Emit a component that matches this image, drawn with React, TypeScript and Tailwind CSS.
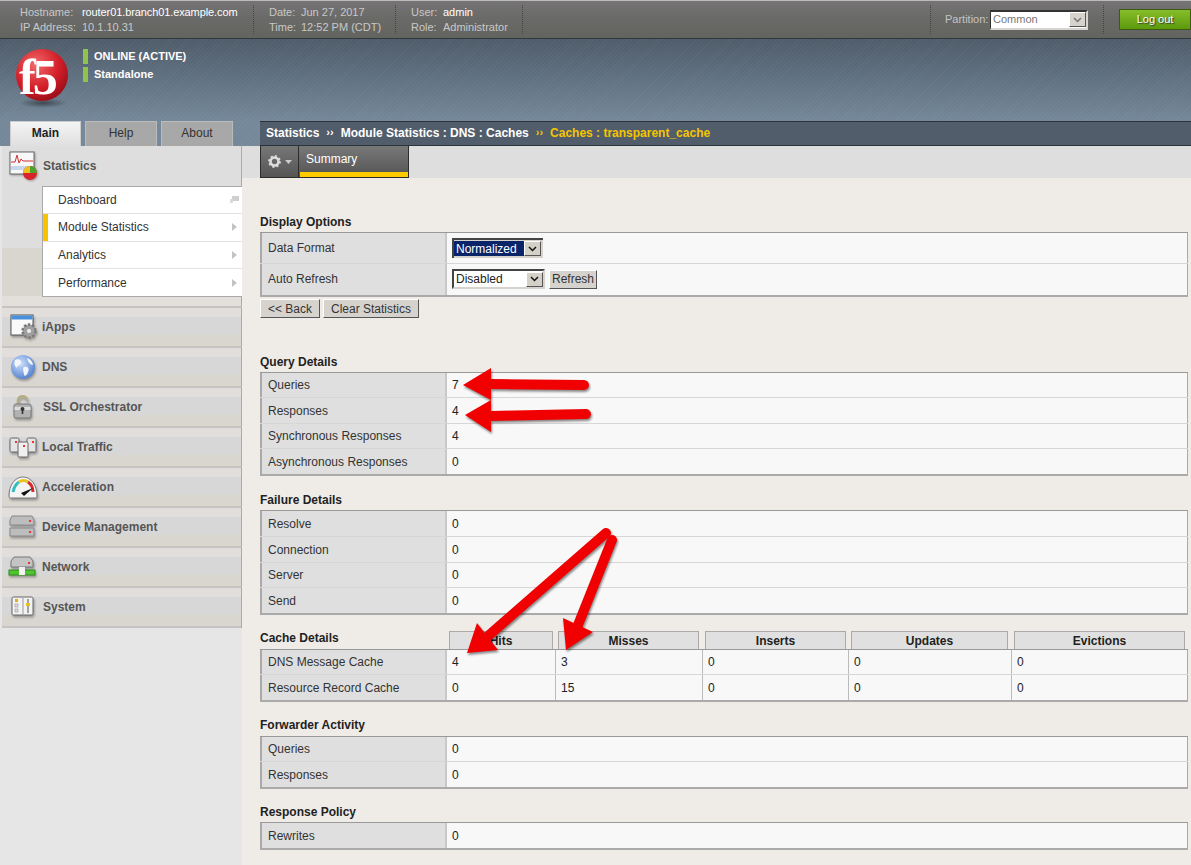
import React from "react";

const Caret = () => (
  <svg width="7" height="8" viewBox="0 0 7 8" className="ml-auto mr-[4px]"><path d="M1 0 L6 4 L1 8 Z" fill="#c4c4c4" /></svg>
);

const SelArrow = ({ light }: { light?: boolean }) => (
  <div className={`w-[17px] h-[15px] flex items-center justify-center border-t border-l border-t-white border-l-white border-r border-b border-r-[#555] border-b-[#555] ${light ? "bg-[#d6d2cc]" : "bg-[#d4d0c8]"}`}>
    <svg width="9" height="6" viewBox="0 0 9 6"><path d="M1 1 L4.5 4.5 L8 1" fill="none" stroke={light ? "#777" : "#111"} strokeWidth="1.5" /></svg>
  </div>
);

const Btn = ({ children, w }: { children: React.ReactNode; w: string }) => (
  <div className={`${w} h-[19px] flex items-center justify-center bg-[#d6d3ce] border border-t-white border-l-white border-r-[#555] border-b-[#555] text-[12px] text-[#333]`}>{children}</div>
);

const Row = ({ label, value, h, children }: { label: string; value?: string; h: string; children?: React.ReactNode }) => (
  <div className={`flex ${h} border-b border-[#d6d6d6] last:border-b-2 last:border-[#aaa]`}>
    <div className="w-[187px] shrink-0 bg-[#dfdfdf] border-l-2 border-[#a9a9a9] border-r-2 border-r-[#c8c8c8] pl-[6px] flex items-center text-[12px] text-[#333]">{label}</div>
    <div className="flex-1 bg-[#f8f8f8] pl-[5px] flex items-center text-[12px] text-[#222] border-r border-[#aaa]">{children ?? value}</div>
  </div>
);

const Table = ({ children }: { children: React.ReactNode }) => (
  <div className="border-t border-[#999]">{children}</div>
);

const Title = ({ children, className = "" }: { children: React.ReactNode; className?: string }) => (
  <div className={`h-[16px] flex items-center text-[12px] font-bold text-[#222] ${className}`}>{children}</div>
);

const Logo = () => (
  <svg width="58" height="62" viewBox="0 0 58 62">
    <defs>
      <radialGradient id="f5r" cx="0.38" cy="0.3" r="0.8">
        <stop offset="0" stopColor="#f06a6a" />
        <stop offset="0.55" stopColor="#d41f2a" />
        <stop offset="1" stopColor="#8d0a14" />
      </radialGradient>
      <radialGradient id="f5s" cx="0.5" cy="0.5" r="0.5">
        <stop offset="0" stopColor="#222" stopOpacity="0.6" />
        <stop offset="1" stopColor="#222" stopOpacity="0" />
      </radialGradient>
    </defs>
    <ellipse cx="27" cy="54" rx="24" ry="5" fill="url(#f5s)" />
    <circle cx="26" cy="26" r="26" fill="url(#f5r)" />
    <text x="3" y="45" fontFamily="'Liberation Serif',serif" fontWeight="700" fontSize="50" fill="#fff" letterSpacing="-3">f5</text>
  </svg>
);

const IconStats = () => (
  <svg width="30" height="30" viewBox="0 0 30 30">
    <rect x="1" y="1" width="24" height="22" fill="#f8f8f8" stroke="#666" />
    <rect x="2" y="15" width="22" height="4" fill="#c8d6ec" />
    <path d="M2 11 L6 11 L8 4 L10 12 L12 8 L14 10 L24 10" fill="none" stroke="#d03030" strokeWidth="1" />
    <circle cx="21" cy="22" r="7" fill="#d8232a" />
    <path d="M21 22 L21 15 A7 7 0 0 1 28 22 Z" fill="#4aa42a" />
    <path d="M21 22 L14 22 A7 7 0 0 1 21 15 Z" fill="#f0c020" />
  </svg>
);

const IconApps = () => (
  <svg width="28" height="26" viewBox="0 0 28 26">
    <rect x="1" y="1" width="22" height="20" fill="#fafafa" stroke="#555" />
    <rect x="1.5" y="1.5" width="21" height="4" fill="#4a90d8" />
    <circle cx="19" cy="17" r="6.5" fill="#a0a0a0" stroke="#7a7a7a" strokeWidth="2.5" strokeDasharray="2.5 1.6" />
    <circle cx="19" cy="17" r="2" fill="#eee" />
  </svg>
);

const IconGlobe = () => (
  <svg width="26" height="26" viewBox="0 0 26 26">
    <defs>
      <radialGradient id="gl" cx="0.4" cy="0.35" r="0.8"><stop offset="0" stopColor="#cfe0fb" /><stop offset="1" stopColor="#3e70c8" /></radialGradient>
    </defs>
    <circle cx="13" cy="13" r="12" fill="url(#gl)" />
    <path d="M5 6 C8 4 12 6 11 9 C10 12 7 11 7 14 C6 13 3 11 5 6 Z M14 13 C17 12 20 14 18 18 C17 21 15 23 14 21 C14 18 12 15 14 13 Z M17 4 C20 5 23 8 23 11 C20 11 18 8 17 4 Z" fill="#f2f5fb" />
  </svg>
);

const IconLock = () => (
  <svg width="22" height="26" viewBox="0 0 22 26">
    <path d="M6 10 V6 C6 1 15 1 15 6 V7" fill="none" stroke="#b5ad80" strokeWidth="2.4" />
    <rect x="2" y="10" width="17" height="14" rx="2" fill="#b2b2b2" stroke="#777" />
    <rect x="2.5" y="13" width="16" height="3" fill="#dcdcdc" />
    <circle cx="10.5" cy="15" r="2" fill="#333" />
    <rect x="9.7" y="15" width="1.6" height="5" fill="#333" />
  </svg>
);

const IconLtm = () => (
  <svg width="28" height="22" viewBox="0 0 28 22">
    <rect x="1" y="2" width="9" height="14" rx="1.5" fill="#e4e4e4" stroke="#666" />
    <rect x="18" y="2" width="9" height="14" rx="1.5" fill="#e4e4e4" stroke="#666" />
    <rect x="9" y="6" width="10" height="15" rx="1.5" fill="#efefef" stroke="#666" />
    <rect x="6" y="5" width="2" height="2" fill="#e33" />
    <rect x="14" y="9" width="2" height="2" fill="#e33" />
    <rect x="23" y="5" width="2" height="2" fill="#e33" />
  </svg>
);

const IconGauge = () => (
  <svg width="30" height="24" viewBox="0 0 30 24">
    <path d="M1 21 C1 10 7 2 15 2 C23 2 29 10 29 21 C29 22.5 28 23 27 23 H3 C2 23 1 22.5 1 21 Z" fill="#f4f4f4" stroke="#777" />
    <path d="M5 17 C6 12 8 9 11 7" fill="none" stroke="#35bcc0" strokeWidth="3" />
    <path d="M11 7 C14 5 17 5 20 7" fill="none" stroke="#e9c41e" strokeWidth="3" />
    <path d="M20 7 C23 9 25 13 25 17" fill="none" stroke="#d92a2a" strokeWidth="3" />
    <path d="M13 18 L25 13 L16 21 Z" fill="#111" />
  </svg>
);

const IconDevice = () => (
  <svg width="26" height="24" viewBox="0 0 26 24">
    <path d="M3 1 H23 L25 5 V10 H1 V5 Z" fill="#bdbdbd" stroke="#888" />
    <path d="M1 13 H25 V21 H1 Z" fill="#bdbdbd" stroke="#888" />
    <rect x="20" y="5" width="2" height="2" fill="#e33" />
    <rect x="20" y="16" width="2" height="2" fill="#e33" />
  </svg>
);

const IconNet = () => (
  <svg width="28" height="22" viewBox="0 0 28 22">
    <path d="M6 1 H22 L25 5 V11 H3 V5 Z" fill="#c4c4c4" stroke="#777" />
    <rect x="20" y="6" width="2" height="2" fill="#e33" />
    <rect x="11" y="11" width="6" height="4" fill="#eee" />
    <rect x="1" y="14" width="26" height="5" fill="#4fc62f" stroke="#2e8a1c" />
    <rect x="11" y="13" width="6" height="6" fill="#f4f4f4" />
  </svg>
);

const IconSystem = () => (
  <svg width="24" height="22" viewBox="0 0 24 22">
    <rect x="1" y="1" width="21" height="18" rx="1.5" fill="#f2f2f2" stroke="#666" />
    <line x1="12" y1="2" x2="12" y2="18" stroke="#999" />
    <rect x="4" y="3" width="3" height="3" fill="#e0b020" /><rect x="4" y="8" width="3" height="3" fill="#ddd" stroke="#888" strokeWidth=".5" /><rect x="4" y="13" width="3" height="3" fill="#ddd" stroke="#888" strokeWidth=".5" />
    <line x1="17" y1="3" x2="17" y2="17" stroke="#555" />
    <rect x="15" y="7" width="4" height="3" fill="#e8c020" />
  </svg>
);

const Gear = () => (
  <svg width="13" height="13" viewBox="0 0 13 13">
    <circle cx="6.5" cy="6.5" r="4" fill="none" stroke="#ddd" strokeWidth="2.6" />
    <circle cx="6.5" cy="6.5" r="5.4" fill="none" stroke="#ddd" strokeWidth="2" strokeDasharray="2 2.2" />
  </svg>
);

const navItems: { label: string; icon: React.ReactNode; pad: string }[] = [
  { label: "iApps", icon: <IconApps />, pad: "pl-[8px] w-[40px]" },
  { label: "DNS", icon: <IconGlobe />, pad: "pl-[8px] w-[40px]" },
  { label: "SSL Orchestrator", icon: <IconLock />, pad: "pl-[10px] w-[41px]" },
  { label: "Local Traffic", icon: <IconLtm />, pad: "pl-[7px] w-[40px]" },
  { label: "Acceleration", icon: <IconGauge />, pad: "pl-[6px] w-[40px]" },
  { label: "Device Management", icon: <IconDevice />, pad: "pl-[7px] w-[40px]" },
  { label: "Network", icon: <IconNet />, pad: "pl-[6px] w-[40px]" },
  { label: "System", icon: <IconSystem />, pad: "pl-[9px] w-[41px]" },
];

const subItems = [
  { label: "Dashboard", h: "h-[27px]", active: false, dash: true },
  { label: "Module Statistics", h: "h-[28px]", active: true, dash: false },
  { label: "Analytics", h: "h-[28px]", active: false, dash: false },
  { label: "Performance", h: "h-[27px]", active: false, dash: false },
];

const Arrow = ({ from, to, a, b }: { from: [number, number]; to: [number, number]; a: [number, number]; b: [number, number] }) => {
  const mid: [number, number] = [(a[0] + b[0]) / 2, (a[1] + b[1]) / 2];
  return (
    <g>
      <line x1={from[0]} y1={from[1]} x2={mid[0]} y2={mid[1]} stroke="#f00000" strokeWidth="10" strokeLinecap="round" />
      <polygon points={`${to[0]},${to[1]} ${a[0]},${a[1]} ${mid[0]},${mid[1]} ${b[0]},${b[1]}`} fill="#f00000" />
    </g>
  );
};

const CacheRow = ({ label, vals, h }: { label: string; vals: string[]; h: string }) => (
  <div className={`flex ${h} border-b border-[#d6d6d6] last:border-b-2 last:border-[#aaa]`}>
    <div className="w-[187px] shrink-0 bg-[#dfdfdf] border-l-2 border-[#a9a9a9] border-r-2 border-r-[#c8c8c8] pl-[6px] flex items-center text-[12px] text-[#333]">{label}</div>
    <div className="w-[109px] bg-[#f8f8f8] pl-[5px] flex items-center text-[12px] text-[#222] border-r border-[#bbb]">{vals[0]}</div>
    <div className="w-[147px] bg-[#f8f8f8] pl-[5px] flex items-center text-[12px] text-[#222] border-r border-[#bbb]">{vals[1]}</div>
    <div className="w-[146px] bg-[#f8f8f8] pl-[5px] flex items-center text-[12px] text-[#222] border-r border-[#bbb]">{vals[2]}</div>
    <div className="w-[163px] bg-[#f8f8f8] pl-[5px] flex items-center text-[12px] text-[#222] border-r border-[#bbb]">{vals[3]}</div>
    <div className="flex-1 bg-[#f8f8f8] pl-[5px] flex items-center text-[12px] text-[#222] border-r border-[#aaa]">{vals[4]}</div>
  </div>
);

const HeadCell = ({ children, cls }: { children: React.ReactNode; cls: string }) => (
  <div className={`${cls} h-[18px] bg-[#e0e0e0] border border-b-0 border-[#aaa] flex items-center justify-center text-[12px] font-bold text-[#222]`}>{children}</div>
);

export default function App() {
  return (
    <div className="relative w-[1191px] h-[865px] overflow-hidden bg-[#efece8] font-['Liberation_Sans',Arial,sans-serif]">
      {/* top bar */}
      <div className="h-[39px] border-t border-t-[#bbbbbb] border-b border-b-[#33383d] bg-[linear-gradient(#767476,#6a6a68_45%,#636460)] flex items-stretch text-[11px] text-[#c8c8c8]">
        <div className="w-[254px] pl-[20px] border-r border-dotted border-[#444] mt-[4px] mb-[4px] leading-[15px] grid grid-cols-[62px_1fr] content-start">
          <span>Hostname:</span><span className="text-white tracking-[-0.1px]">router01.branch01.example.com</span>
          <span>IP Address:</span><span>10.1.10.31</span>
        </div>
        <div className="w-[142px] pl-[15px] border-r border-dotted border-[#444] mt-[4px] mb-[4px] leading-[15px] grid grid-cols-[32px_1fr] content-start">
          <span>Date:</span><span>Jun 27, 2017</span>
          <span>Time:</span><span>12:52 PM (CDT)</span>
        </div>
        <div className="w-[127px] pl-[15px] border-r border-dotted border-[#444] mt-[4px] mb-[4px] leading-[15px] grid grid-cols-[32px_1fr] content-start">
          <span>User:</span><span className="text-white">admin</span>
          <span>Role:</span><span>Administrator</span>
        </div>
        <div className="flex-1" />
        <div className="w-[174px] border-l border-r border-dotted border-[#444] my-[4px] pl-[14px] flex items-center">
          <span className="w-[45px] text-[#c4c4c4]">Partition:</span>
          <div className="w-[98px] h-[20px] flex items-center bg-white border-t-2 border-l border-[#333] border-r-2 border-r-[#d8d5d0] border-b-2 border-b-[#d8d5d0] pl-[2px] text-[#777]">
            <span className="flex-1">Common</span>
            <SelArrow light />
          </div>
        </div>
        <div className="w-[15px]" />
        <div className="w-[72px] h-[21px] mt-[8px] border border-[#3b5a14] bg-[linear-gradient(#86bd2a,#5c9a0c)] flex items-center justify-center text-white text-[11px] [text-shadow:1px_1px_1px_#333]">Log out</div>
      </div>

      {/* banner */}
      <div className="h-[107px] flex flex-col bg-[repeating-linear-gradient(135deg,#ffffff08_0,#ffffff08_1px,transparent_1px,transparent_3px),linear-gradient(#4f5c6a,#74889a_77%,#74889a)]">
        <div className="h-[82px] flex items-start">
          <div className="pl-[16px] pt-[10px] w-[83px] shrink-0"><Logo /></div>
          <div className="pt-[10px] flex flex-col gap-[3px] text-[11px] font-bold text-white">
            <div className="flex items-center h-[15px]"><span className="w-[5px] h-[15px] bg-[#8fc44c] mr-[6px]" />ONLINE (ACTIVE)</div>
            <div className="flex items-center h-[15px]"><span className="w-[5px] h-[15px] bg-[#8fc44c] mr-[6px]" />Standalone</div>
          </div>
        </div>
        <div className="h-[25px] flex">
          <div className="w-[260px] shrink-0 flex pl-[10px] gap-[4px] items-end text-[12px]">
            <div className="w-[71px] h-[25px] pb-[2px] bg-[linear-gradient(#f4f4f4,#dfdfdf)] border border-b-0 border-[#ccc] flex items-center justify-center font-bold text-[#222]">Main</div>
            <div className="w-[72px] h-[25px] pb-[2px] bg-[#a8a8a8] border border-b-0 border-[#bbb] flex items-center justify-center text-[#333]">Help</div>
            <div className="w-[72px] h-[25px] pb-[2px] bg-[#a8a8a8] border border-b-0 border-[#bbb] flex items-center justify-center text-[#333]">About</div>
          </div>
          <div className="flex-1 bg-[#515d6b] border-t border-b border-[#2b323c] flex items-center pl-[6px] pb-[2px] text-[12px] font-bold text-white whitespace-pre">
            <span>Statistics</span>
            <span className="mx-[7px] text-[11px]">››</span>
            <span>Module Statistics : DNS : Caches</span>
            <span className="mx-[7px] text-[11px] text-[#f6c500]">››</span>
            <span className="text-[#f6c500]">Caches : transparent_cache</span>
          </div>
        </div>
      </div>

      <div className="flex">
        {/* sidebar */}
        <div className="w-[242px] shrink-0 h-[719px] bg-[#e6e6e6] flex flex-col pl-[2px]">
          <div className="h-[160px] border-r border-[#aaa] bg-[linear-gradient(#dedede_0,#dedede_102px,#d9d6d0_102px,#d9d6d0_150px,#e3dfdb_150px)] flex flex-col">
            <div className="h-[40px] flex items-center pl-[7px] text-[12px] font-bold text-[#555]">
              <span className="w-[34px] shrink-0 drop-shadow-[1px_1px_1px_rgba(0,0,0,0.3)]"><IconStats /></span>Statistics
            </div>
            <div className="ml-[40px] -mr-px h-[111px] border-l border-t border-b border-[#aaa] bg-white flex flex-col">
              {subItems.map((s) => (
                <div key={s.label} className={`${s.h} flex items-center border-b border-[#e2e2e2] last:border-b-0 text-[12px] text-[#333]`}>
                  <span className={`w-[5px] h-full mr-[10px] ${s.active ? "bg-[#f8c300]" : "bg-white"}`} />
                  {s.label}
                  {s.dash ? (
                    <svg width="9" height="7" viewBox="0 0 9 7" className="ml-auto mr-[3px]"><rect x="2" y="0" width="7" height="5" fill="#cfcfcf" /><rect x="0" y="3" width="3" height="4" fill="#dcdcdc" /></svg>
                  ) : <Caret />}
                </div>
              ))}
            </div>
          </div>
          {navItems.map((n) => (
            <div key={n.label} className="h-[40px] border-t-2 border-[#c4c4c2] border-r border-r-[#aaa] bg-[linear-gradient(#e2dedb_0,#e2dedb_9px,#d7d7d7_9px,#d7d7d7_27px,#d9d6d0_27px)] flex items-center text-[12px] font-bold text-[#555]">
              <span className={`${n.pad} shrink-0 flex items-center drop-shadow-[1px_2px_1px_rgba(0,0,0,0.3)]`}>{n.icon}</span>{n.label}
            </div>
          ))}
          <div className="h-[2px] bg-[#c4c4c2] border-r border-[#aaa]" />
        </div>

        {/* main */}
        <div className="flex-1 min-w-0">
          <div className="h-[32px] bg-[#dedede] pl-[18px] flex">
            <div className="w-[39px] bg-[linear-gradient(#777,#555)] border border-t-0 border-[#2c2c2c] flex items-center justify-center gap-[4px]">
              <Gear />
              <svg width="7" height="4" viewBox="0 0 7 4"><path d="M0 0 H7 L3.5 4 Z" fill="#ccc" /></svg>
            </div>
            <div className="w-[110px] border-r border-b border-[#2c2c2c] flex flex-col bg-[linear-gradient(#787878,#545454)]">
              <div className="flex-1 pl-[7px] pt-[4px] text-[12px] text-white">Summary</div>
              <div className="h-[5px] bg-[#ffcc00] ml-px" />
            </div>
          </div>

          <div className="pl-[18px] pr-[3px]">
            <Title className="mt-[36px] mb-[2px]">Display Options</Title>
            <Table>
              <Row label="Data Format" h="h-[31px]">
                <div className="h-[20px] flex items-center bg-[#d6d3ce] border-t-2 border-l-2 border-[#444] pr-[2px] pb-[1px]">
                  <span className="w-[70px] h-[15px] bg-[#0a246a] text-white flex items-center pl-[2px] text-[12px]">Normalized</span>
                  <SelArrow />
                </div>
              </Row>
              <Row label="Auto Refresh" h="h-[33px] [&>div]:pb-[1px]">
                <div className="h-[20px] flex items-center bg-white border-t-2 border-l-2 border-[#444] border-r-2 border-r-[#d6d3ce] border-b-2 border-b-[#d6d3ce] pl-[2px] w-[93px]">
                  <span className="flex-1">Disabled</span>
                  <SelArrow />
                </div>
                <div className="ml-[4px]"><Btn w="w-[48px]">Refresh</Btn></div>
              </Row>
            </Table>
            <div className="flex gap-[3px] mt-[2px]">
              <Btn w="w-[60px]">&lt;&lt; Back</Btn>
              <Btn w="w-[96px]">Clear Statistics</Btn>
            </div>

            <Title className="mt-[36px] mb-[2px]">Query Details</Title>
            <Table>
              <Row label="Queries" value="7" h="h-[25px]" />
              <Row label="Responses" value="4" h="h-[26px]" />
              <Row label="Synchronous Responses" value="4" h="h-[25px]" />
              <Row label="Asynchronous Responses" value="0" h="h-[27px]" />
            </Table>

            <Title className="mt-[16px] mb-[2px]">Failure Details</Title>
            <Table>
              <Row label="Resolve" value="0" h="h-[26px]" />
              <Row label="Connection" value="0" h="h-[26px]" />
              <Row label="Server" value="0" h="h-[25px]" />
              <Row label="Send" value="0" h="h-[27px]" />
            </Table>

            <div className="mt-[16px] flex items-start">
              <div className="w-[189px] shrink-0 h-[13px] flex items-center text-[12px] font-bold text-[#222]">Cache Details</div>
              <div className="flex">
                <HeadCell cls="w-[104px] mr-[5px]">Hits</HeadCell>
                <HeadCell cls="w-[141px] mr-[6px]">Misses</HeadCell>
                <HeadCell cls="w-[141px] mr-[5px]">Inserts</HeadCell>
                <HeadCell cls="w-[157px] mr-[6px]">Updates</HeadCell>
                <HeadCell cls="w-[171px]">Evictions</HeadCell>
              </div>
            </div>
            <Table>
              <CacheRow label="DNS Message Cache" vals={["4", "3", "0", "0", "0"]} h="h-[25px]" />
              <CacheRow label="Resource Record Cache" vals={["0", "15", "0", "0", "0"]} h="h-[27px]" />
            </Table>

            <Title className="mt-[15px] mb-[3px]">Forwarder Activity</Title>
            <Table>
              <Row label="Queries" value="0" h="h-[25px]" />
              <Row label="Responses" value="0" h="h-[27px]" />
            </Table>

            <Title className="mt-[15px] mb-[2px]">Response Policy</Title>
            <Table>
              <Row label="Rewrites" value="0" h="h-[27px]" />
            </Table>
          </div>
        </div>
      </div>

      {/* annotation arrows */}
      <svg className="absolute inset-0 pointer-events-none [filter:drop-shadow(1px_2px_1px_rgba(0,0,0,0.45))]" width="1191" height="865" viewBox="0 0 1191 865">
        <Arrow from={[584, 385]} to={[463, 385]} a={[491, 368]} b={[491, 400]} />
        <Arrow from={[586, 414]} to={[465, 415]} a={[491, 400]} b={[491, 432]} />
        <Arrow from={[606, 533]} to={[467, 653]} a={[477, 623]} b={[498, 650]} />
        <Arrow from={[612, 540]} to={[566, 650]} a={[563, 618]} b={[593, 632]} />
      </svg>
    </div>
  );
}
